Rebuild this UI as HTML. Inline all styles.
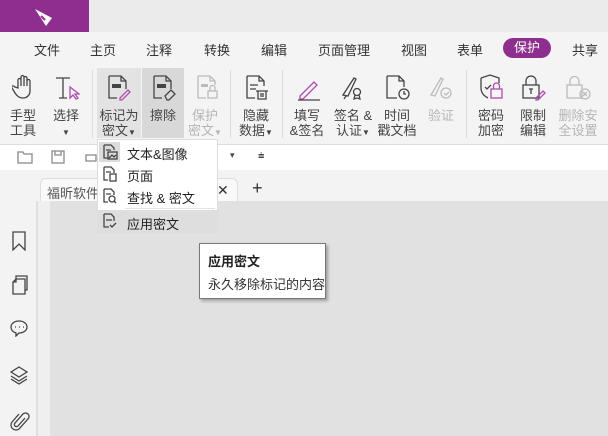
<!DOCTYPE html><html><head><meta charset="utf-8"><style>
*{margin:0;padding:0;box-sizing:border-box}
body{width:608px;height:436px;overflow:hidden;position:relative;background:#e1e1e1;font-family:"Liberation Sans","Noto Sans CJK SC",sans-serif;font-size:13px;color:#333}
.a{position:absolute}
.m{position:absolute;top:40px;font-size:13px;color:#333}
.lb{position:absolute;text-align:center;font-size:13px;line-height:15px;color:#444;width:50px}
.g{color:#b5b5b5}
svg{position:absolute;fill:none;stroke:#444;stroke-width:1.3}
.mi{position:absolute;left:127px;font-size:13px;color:#222}
</style></head><body>
<div class="a" style="left:0;top:0;width:608px;height:32px;background:#ebebeb"></div>
<div class="a" style="left:0;top:0;width:89px;height:32px;background:#8e2f8f"></div>
<svg style="left:32px;top:6px" width="24" height="22" viewBox="0 0 24 22"><path d="M3 3 L20 12 L14 20 Z" fill="#fff" stroke="none"/><path d="M9 10 L13 14" stroke="#8e2f8f" stroke-width="2"/></svg>
<div class="a" style="left:0;top:32px;width:608px;height:113px;background:#f4f4f4;border-bottom:1px solid #ddd"></div>
<div class="m" style="left:34px">文件</div><div class="m" style="left:90px">主页</div><div class="m" style="left:146px">注释</div><div class="m" style="left:204px">转换</div><div class="m" style="left:261px">编辑</div><div class="m" style="left:318px">页面管理</div><div class="m" style="left:401px">视图</div><div class="m" style="left:457px">表单</div>
<div class="a" style="left:503px;top:38px;width:48px;height:20px;border-radius:10px;background:#8e2f8f;color:#fff;text-align:center;line-height:20px">保护</div>
<div class="m" style="left:572px">共享</div>
<div class="a" style="left:97px;top:68px;width:44px;height:70px;background:#e3e3e3"></div>
<div class="a" style="left:142px;top:68px;width:42px;height:70px;background:#d8d8d8"></div>
<div class="a" style="left:92px;top:70px;width:1px;height:68px;background:#ddd"></div>
<div class="a" style="left:230px;top:70px;width:1px;height:68px;background:#ddd"></div>
<div class="a" style="left:282px;top:70px;width:1px;height:68px;background:#ddd"></div>
<div class="a" style="left:466px;top:70px;width:1px;height:68px;background:#ddd"></div>
<!-- icons -->
<svg style="left:12px;top:74px" width="24" height="26" viewBox="0 0 24 26"><path d="M6 14V6a1.5 1.5 0 013 0v6V3a1.5 1.5 0 013 0v9V4a1.5 1.5 0 013 0v8V7a1.5 1.5 0 013 0v10c0 4-3 7-7 7s-6-2-8-5l-3-5c-1-2 1-3 3-1z"/></svg>
<svg style="left:54px;top:76px" width="26" height="26" viewBox="0 0 26 26"><path d="M2 2h14M9 2v20M5 22h8"/><path d="M16 11l0 11 3-3 3 4 2-1-3-4h4z" stroke="#b04cb0"/></svg>
<svg style="left:106px;top:74px" width="28" height="28" viewBox="0 0 28 28"><path d="M3 2h12l5 5v8M3 2v22h8M15 2v5h5"/><rect x="6" y="10" width="9" height="4" fill="#444" stroke="none"/><path d="M14 24l8-8 2 2-8 8h-2z" stroke="#b04cb0"/></svg>
<svg style="left:151px;top:74px" width="28" height="28" viewBox="0 0 28 28"><path d="M3 2h12l5 5v8M3 2v22h8M15 2v5h5"/><rect x="6" y="10" width="9" height="4" fill="#444" stroke="none"/><path d="M14 22l6-6 4 4-6 6h-2z"/></svg>
<svg style="left:195px;top:74px" width="28" height="28" viewBox="0 0 28 28" style="stroke:#bbb"><path d="M3 2h12l5 5v4M3 2v22h8M15 2v5h5" stroke="#bbb"/><rect x="6" y="10" width="7" height="3" fill="#bbb" stroke="none"/><rect x="13" y="17" width="9" height="7" stroke="#bbb"/><path d="M15 17v-3a2.5 2.5 0 015 0v3" stroke="#bbb"/></svg>
<svg style="left:244px;top:74px" width="28" height="28" viewBox="0 0 28 28"><path d="M3 2h12l5 5v5M3 2v22h8M15 2v5h5M6 11h8M6 15h6"/><path d="M12 17h12M14 17v8h8v-8M17 19v4M19 19v4"/></svg>
<svg style="left:296px;top:76px" width="26" height="26" viewBox="0 0 26 26"><path d="M4 20L18 6l3 3-14 14H4z" stroke="#b04cb0"/><path d="M2 24h22"/></svg>
<svg style="left:340px;top:75px" width="26" height="26" viewBox="0 0 26 26"><path d="M3 20L14 3l2 1-8 17z M6 21l-2 3"/><circle cx="17" cy="17" r="3.5"/><path d="M15 20l-1 4 3-1 3 1-1-4"/></svg>
<svg style="left:384px;top:74px" width="28" height="28" viewBox="0 0 28 28"><path d="M3 2h12l5 5v6M3 2v22h10M15 2v5h5"/><circle cx="20" cy="20" r="5"/><path d="M20 17v3h2"/></svg>
<svg style="left:428px;top:75px" width="26" height="26" viewBox="0 0 26 26"><path d="M3 20L13 3l2 1-8 17z" stroke="#bbb"/><circle cx="18" cy="18" r="5" stroke="#bbb"/><path d="M16 18l2 2 3-3" stroke="#bbb"/></svg>
<svg style="left:478px;top:74px" width="28" height="28" viewBox="0 0 28 28"><path d="M3 4l9-3 9 3v5M3 4v10c0 6 5 9 7 10"/><path d="M7 13l2 2 4-4"/><rect x="13" y="15" width="11" height="9" stroke="#b04cb0"/><path d="M15.5 15v-3a3 3 0 016 0v3" stroke="#b04cb0"/></svg>
<svg style="left:520px;top:74px" width="28" height="28" viewBox="0 0 28 28"><rect x="3" y="11" width="16" height="13"/><path d="M6 11V7a5 5 0 0110 0v4M9 15h4M11 15v5"/><path d="M16 24l7-7 2 2-7 7h-2z" stroke="#b04cb0"/></svg>
<svg style="left:564px;top:74px" width="28" height="28" viewBox="0 0 28 28"><rect x="3" y="11" width="15" height="13" stroke="#bbb"/><path d="M6 11V7a4.5 4.5 0 019 0v4" stroke="#bbb"/><circle cx="21" cy="20" r="5" stroke="#bbb"/><path d="M19 18l4 4M23 18l-4 4" stroke="#bbb"/></svg>
<!-- labels -->
<div class="lb" style="left:-2px;top:108px">手型<br>工具</div>
<div class="lb" style="left:41px;top:108px">选择<br><span style="font-size:8px">▼</span></div>
<div class="lb" style="left:94px;top:108px">标记为<br>密文<span style="font-size:8px">▼</span></div>
<div class="lb" style="left:138px;top:108px">擦除</div>
<div class="lb g" style="left:180px;top:108px">保护<br>密文<span style="font-size:8px">▼</span></div>
<div class="lb" style="left:231px;top:108px">隐藏<br>数据<span style="font-size:8px">▼</span></div>
<div class="lb" style="left:282px;top:108px">填写<br>&amp;签名</div>
<div class="lb" style="left:328px;top:108px">签名 &amp;<br>认证<span style="font-size:8px">▼</span></div>
<div class="lb" style="left:372px;top:108px">时间<br>戳文档</div>
<div class="lb g" style="left:416px;top:108px">验证</div>
<div class="lb" style="left:466px;top:108px">密码<br>加密</div>
<div class="lb" style="left:508px;top:108px">限制<br>编辑</div>
<div class="lb g" style="left:553px;top:108px">删除安<br>全设置</div>
<!-- quick toolbar -->
<div class="a" style="left:0;top:145px;width:608px;height:25px;background:#fff"></div>
<svg style="left:17px;top:150px" width="16" height="14" viewBox="0 0 16 14" style="stroke:#888"><path d="M1 2h5l1 2h8v9H1z" stroke="#888"/></svg>
<svg style="left:51px;top:150px" width="14" height="14" viewBox="0 0 14 14"><path d="M1 1h12v12H1zM4 1v4h6V1" stroke="#888"/></svg>
<svg style="left:83px;top:150px" width="14" height="14" viewBox="0 0 14 14"><path d="M3 5h10v6H3z" stroke="#888"/></svg>
<div class="a" style="left:230px;top:150px;font-size:9px;color:#444">▾</div>
<div class="a" style="left:258px;top:150px;font-size:11px;color:#444">⩧</div>
<!-- tab row -->
<div class="a" style="left:0;top:170px;width:608px;height:31px;background:#f3f3f3"></div>
<div class="a" style="left:40px;top:178px;width:198px;height:23px;background:#f9f9f9;border:1px solid #ddd;border-bottom:none;border-radius:6px 6px 0 0"></div>
<div class="a" style="left:47px;top:183px;font-size:13px;color:#555">福昕软件</div>
<div class="a" style="left:217px;top:182px;font-size:14px;color:#333">✕</div>
<div class="a" style="left:252px;top:178px;font-size:18px;color:#333">+</div>
<!-- sidebar -->
<div class="a" style="left:0;top:201px;width:37px;height:235px;background:#f3f3f3;border-right:1px solid #ddd"></div>
<div class="a" style="left:38px;top:201px;width:12px;height:235px;background:#efefef"></div>
<svg style="left:11px;top:231px" width="16" height="20" viewBox="0 0 16 20"><path d="M2 1h12v18l-6-6-6 6z"/></svg>
<svg style="left:11px;top:275px" width="18" height="20" viewBox="0 0 18 20"><path d="M5 4h9v15H2V7zM2 7h3V4M5 4V1h11v14h-2"/></svg>
<svg style="left:9px;top:319px" width="20" height="18" viewBox="0 0 20 18"><path d="M10 2c5 0 8 3 8 6s-3 6-8 6l-3 3v-3c-3-1-5-3-5-6 0-3 3-6 8-6z"/><path d="M6 8h1M10 8h1M14 8h1"/></svg>
<svg style="left:9px;top:365px" width="20" height="20" viewBox="0 0 20 20"><path d="M10 2l8 5-8 5-8-5zM2 11l8 5 8-5M2 14l8 5 8-5"/></svg>
<svg style="left:10px;top:410px" width="20" height="22" viewBox="0 0 20 22"><path d="M15 8l-7 8a2 2 0 01-3-3l8-9a3.5 3.5 0 015 5l-9 10a5 5 0 01-7-7l7-8"/></svg>
<!-- dropdown -->
<div class="a" style="left:97px;top:139px;width:121px;height:94px;background:#fff;border:1px solid #ddd"></div>
<div class="a" style="left:99px;top:142px;width:21px;height:20px;background:#dcdcdc"></div>
<div class="a" style="left:98px;top:210px;width:119px;height:22px;background:#dedede"></div>
<div class="a" style="left:125px;top:208px;width:90px;height:1px;background:#e3e3e3"></div>
<svg style="left:102px;top:144px" width="16" height="16" viewBox="0 0 16 16"><path d="M2 1h7l3 3v2M2 1v13h4M4 6h5"/><rect x="6" y="8" width="9" height="7"/><path d="M7 14l3-3 2 2 2-2"/></svg>
<svg style="left:102px;top:166px" width="16" height="16" viewBox="0 0 16 16"><path d="M2 1h7l3 3v3M2 1v13h4M4 6h5"/><rect x="8" y="8" width="6" height="7"/></svg>
<svg style="left:102px;top:188px" width="16" height="16" viewBox="0 0 16 16"><path d="M2 1h7l3 3v3M2 1v13h4M4 6h5"/><circle cx="10" cy="11" r="3"/><path d="M12 13l2 2"/></svg>
<svg style="left:102px;top:213px" width="16" height="16" viewBox="0 0 16 16"><path d="M2 1h7l3 3v4M2 1v13h5M4 7h6"/><path d="M8 12l2 2 4-4"/></svg>
<div class="mi" style="top:144px">文本&amp;图像</div>
<div class="mi" style="top:166px">页面</div>
<div class="mi" style="top:188px">查找 &amp; 密文</div>
<div class="mi" style="top:214px">应用密文</div>
<!-- tooltip -->
<div class="a" style="left:199px;top:243px;width:127px;height:56px;background:#fff;border:1px solid #777;box-shadow:2px 2px 3px rgba(0,0,0,.3)"></div>
<div class="a" style="left:208px;top:251px;font-weight:bold;font-size:13px;color:#222">应用密文</div>
<div class="a" style="left:208px;top:274px;font-size:13px;color:#333">永久移除标记的内容</div>
</body></html>
